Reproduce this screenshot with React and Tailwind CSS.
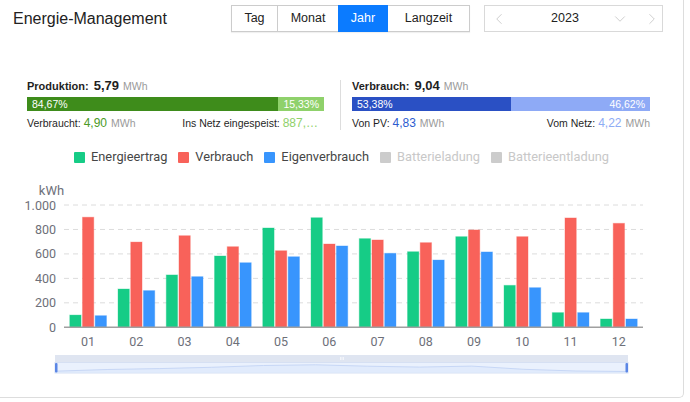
import React from 'react';
import { ChevronLeft, ChevronDown, ChevronRight } from 'lucide-react';

const months = ['01', '02', '03', '04', '05', '06', '07', '08', '09', '10', '11', '12'];
const ertrag = [100, 313, 428, 583, 812, 896, 725, 618, 741, 343, 120, 68];
const verbrauch = [900, 697, 749, 659, 626, 681, 714, 692, 796, 741, 894, 850];
const eigen = [95, 300, 414, 528, 577, 665, 605, 550, 616, 324, 120, 68];

const ticks = [
    { v: 0, label: '0' },
    { v: 200, label: '200' },
    { v: 400, label: '400' },
    { v: 600, label: '600' },
    { v: 800, label: '800' },
    { v: 1000, label: '1.000' },
];

const legend = [
    { name: 'Energieertrag', color: 'bg-[#16cc86]', text: 'text-[#464646]' },
    { name: 'Verbrauch', color: 'bg-[#f8625a]', text: 'text-[#464646]' },
    { name: 'Eigenverbrauch', color: 'bg-[#3895fd]', text: 'text-[#464646]' },
    { name: 'Batterieladung', color: 'bg-[#cccccc]', text: 'text-[#c8c8c8]' },
    { name: 'Batterieentladung', color: 'bg-[#cccccc]', text: 'text-[#c8c8c8]' },
];

// chart geometry (svg coords)
const X0 = 64;
const X1 = 643;
const Y0 = 149.3;
const K = 0.1223;
const CAT = (X1 - X0) / 12;
const BW = 11.3;

const Chart = () => {
    const series = [
        { data: ertrag, color: '#16cc86', off: -18.35 },
        { data: verbrauch, color: '#f8625a', off: -5.65 },
        { data: eigen, color: '#3895fd', off: 7.05 },
    ];

    // mini line in the data zoom
    const sx0 = 55;
    const sx1 = 628;
    const pts = ertrag.map((v, i) => [sx0 + ((sx1 - sx0) * i) / 11, 194 - (v / 1000) * 8]);
    const line = pts.map((p, i) => `${i === 0 ? 'M' : 'L'}${p[0].toFixed(1)} ${p[1].toFixed(1)}`).join(' ');
    const area = `${line} L${sx1} 195 L${sx0} 195 Z`;

    return (
        <svg width="684" height="200" className="block font-['Roboto','Noto_Sans',sans-serif]">
            <text x="51.5" y="16.5" textAnchor="middle" fontSize="13" fill="#6e7079">kWh</text>

            {ticks.map((t) => {
                const y = Y0 - t.v * K;
                return (
                    <g key={t.v}>
                        {t.v > 0 && (
                            <line x1={X0} x2={X1} y1={y} y2={y} stroke="#dcdcdc" strokeDasharray="5 4" />
                        )}
                        <text x="56" y={y + 4.5} textAnchor="end" fontSize="12.5" fill="#6e7079">
                            {t.label}
                        </text>
                    </g>
                );
            })}

            {months.map((m, i) => {
                const cx = X0 + CAT * (i + 0.5);
                return (
                    <g key={m}>
                        {series.map((s, j) => {
                            const h = s.data[i] * K;
                            return (
                                <rect
                                    key={j}
                                    x={cx + s.off}
                                    y={Y0 - h}
                                    width={BW}
                                    height={h}
                                    fill={s.color}
                                    stroke={s.color}
                                    strokeOpacity="0.35"
                                    strokeWidth="1"
                                />
                            );
                        })}
                        <text x={cx} y="167.5" textAnchor="middle" fontSize="12.5" fill="#6e7079">
                            {m}
                        </text>
                    </g>
                );
            })}

            <line x1={X0} x2={X1} y1={Y0} y2={Y0} stroke="#a0a0a0" strokeWidth="1.5" />

            {/* data zoom */}
            <rect x={sx0} y="177" width={sx1 - sx0} height="7.5" fill="#dfe5f1" />
            <g stroke="#f7f9fc" strokeWidth="0.8">
                <line x1="340.5" x2="340.5" y1="179" y2="182" />
                <line x1="342" x2="342" y1="179" y2="182" />
                <line x1="343.5" x2="343.5" y1="179" y2="182" />
            </g>
            <rect x={sx0} y="184.5" width={sx1 - sx0} height="10.5" fill="#eaf1fd" stroke="#d6e0f3" strokeWidth="1" />
            <path d={area} fill="#dde8fb" opacity="0.7" />
            <path d={line} fill="none" stroke="#c7d7f6" strokeWidth="1" />
            <rect x={sx0} y="185" width="2.5" height="9.5" rx="1" fill="#5b86e5" />
            <rect x={sx1 - 2.5} y="185" width="2.5" height="9.5" rx="1" fill="#5b86e5" />
        </svg>
    );
};

const StatBlock = ({ title, total, dark, light, share, darkPct, lightPct, leftLabel, leftValue, leftColor, rightLabel, rightValue, rightColor, rightUnit = true, width }) => (
    <div className={width}>
        <div className="flex items-baseline h-[16px] leading-[16px] text-[#1f1f1f]">
            <span className="text-[11px] font-bold">{title}</span>
            <span className="text-[13px] font-bold ml-[5px]">{total}</span>
            <span className="text-[10.5px] text-[#9a9a9a] ml-[4px]">MWh</span>
        </div>
        <div className="flex mt-[3px] h-[14px] text-[10.5px] leading-[14px] text-white">
            <div className={`${dark} pl-[5px]`} style={{ width: `${share}%` }}>{darkPct}</div>
            <div className={`${light} flex-1 text-right pr-[5px]`}>{lightPct}</div>
        </div>
        <div className="flex justify-between items-baseline mt-[4px] h-[16px] leading-[16px] text-[10.5px] text-[#1f1f1f]">
            <div className="flex items-baseline">
                <span>{leftLabel}&nbsp;</span>
                <span className={`text-[12px] ${leftColor}`}>{leftValue}</span>
                <span className="text-[#9a9a9a] ml-[4px]">MWh</span>
            </div>
            <div className={`flex items-baseline ${rightUnit ? '' : 'mr-[6px]'}`}>
                <span>{rightLabel}&nbsp;</span>
                <span className={`text-[12px] ${rightColor}`}>{rightValue}</span>
                {rightUnit && <span className="text-[#9a9a9a] ml-[4px]">MWh</span>}
            </div>
        </div>
    </div>
);

export default function App() {
    return (
        <div className="w-[684px] h-[398px] bg-white border-r border-b border-[#dddddd] rounded-br-[5px] font-['Liberation_Sans',Arial,sans-serif] overflow-hidden">
            {/* Header */}
            <div className="flex items-center pt-[5px]">
                <div className="w-[231px] pl-[13px] text-[16px] text-[#222]">Energie-Management</div>
                <div className="flex h-[27px] text-[12.5px] shadow-[0_1px_1px_rgba(0,0,0,0.06)]">
                    <button className="w-[46px] border-y border-l border-[#cccccc] text-[#222]">Tag</button>
                    <button className="w-[61px] border-y border-l border-[#cccccc] text-[#222]">Monat</button>
                    <button className="w-[50px] bg-[#0b7bff] text-white">Jahr</button>
                    <button className="w-[82px] border-y border-r border-[#cccccc] text-[#222]">Langzeit</button>
                </div>
                <div className="ml-[14px] flex items-center w-[179px] h-[27px] border border-[#d9d9d9] text-[12.5px] text-[#222]">
                    <div className="w-[27px] flex justify-center">
                        <ChevronLeft size={18} strokeWidth={1} color="#bdbdbd" />
                    </div>
                    <div className="w-[80px] ml-[13px] text-center">2023</div>
                    <div className="w-[30px] flex justify-center">
                        <ChevronDown size={18} strokeWidth={1} color="#bdbdbd" />
                    </div>
                    <div className="w-[27px] flex justify-end pr-[1px]">
                        <ChevronRight size={18} strokeWidth={1} color="#bdbdbd" />
                    </div>
                </div>
            </div>

            {/* Stats */}
            <div className="flex mt-[46px] pl-[27px]">
                <StatBlock
                    width="w-[297px]"
                    title="Produktion:"
                    total="5,79"
                    dark="bg-[#3e8c1b]"
                    light="bg-[#8fd16b]"
                    share={84.67}
                    darkPct="84,67%"
                    lightPct="15,33%"
                    leftLabel="Verbraucht:"
                    leftValue="4,90"
                    leftColor="text-[#4a9a26]"
                    rightLabel="Ins Netz eingespeist:"
                    rightValue="887,…"
                    rightColor="text-[#8fd16b]"
                    rightUnit={false}
                />
                <div className="w-px h-[50px] mt-[2px] bg-[#dddddd] ml-[16px] mr-[11px]" />
                <StatBlock
                    width="w-[298px]"
                    title="Verbrauch:"
                    total="9,04"
                    dark="bg-[#2a50c4]"
                    light="bg-[#8eaaf6]"
                    share={53.38}
                    darkPct="53,38%"
                    lightPct="46,62%"
                    leftLabel="Von PV:"
                    leftValue="4,83"
                    leftColor="text-[#2d5ccf]"
                    rightLabel="Vom Netz:"
                    rightValue="4,22"
                    rightColor="text-[#8eacf5]"
                />
            </div>

            {/* Legend */}
            <div className="flex justify-center items-center gap-[11px] mt-[18px] h-[16px] font-['Roboto','Noto_Sans',sans-serif] text-[12.8px]">
                {legend.map((l) => (
                    <div key={l.name} className="flex items-center gap-[6px]">
                        <span className={`w-[11px] h-[11px] rounded-[1px] ${l.color}`} />
                        <span className={l.text}>{l.name}</span>
                    </div>
                ))}
            </div>

            {/* Chart */}
            <div className="mt-[13px]">
                <Chart />
            </div>
        </div>
    );
}
